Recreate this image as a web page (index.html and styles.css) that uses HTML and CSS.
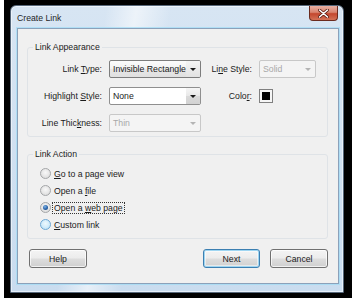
FILE: index.html
```html
<!DOCTYPE html>
<html>
<head>
<meta charset="utf-8">
<title>Create Link</title>
<link rel="stylesheet" href="styles.css">
</head>
<body>
<div class="shot">
  <div class="window">
    <div class="titlebar">
      <span class="title">Create Link</span>
      <span class="close">
        <svg width="11" height="9" viewBox="0 0 11 9">
          <path d="M1.5 1 L9.5 8 M9.5 1 L1.5 8" stroke="#5a1a10" stroke-width="3" stroke-linecap="round"/>
          <path d="M1.5 1 L9.5 8 M9.5 1 L1.5 8" stroke="#ffffff" stroke-width="1.6" stroke-linecap="round"/>
        </svg>
      </span>
    </div>
    <div class="client">
      <fieldset class="group g1">
        <legend>Link Appearance</legend>
        <div class="grid">
          <span class="lbl">Link <u>T</u>ype:</span>
          <div class="combo dlist"><span class="val">Invisible Rectangle</span><span class="btn"><i class="tri"></i></span></div>
          <span class="lbl">Li<u>n</u>e Style:</span>
          <div class="combo disabled"><span class="val">Solid</span><span class="btn"><i class="tri"></i></span></div>

          <span class="lbl">Highlight <u>S</u>tyle:</span>
          <div class="combo edit"><span class="val">None</span><span class="btn"><i class="tri"></i></span></div>
          <span class="lbl">Colo<u>r</u>:</span>
          <span class="swatch"></span>

          <span class="lbl">Line Thic<u>k</u>ness:</span>
          <div class="combo disabled"><span class="val">Thin</span><span class="btn"><i class="tri"></i></span></div>
        </div>
      </fieldset>
      <fieldset class="group g2">
        <legend>Link Action</legend>
        <div class="opts">
          <div class="opt"><span class="radio"></span><span class="txt"><u>G</u>o to a page view</span></div>
          <div class="opt"><span class="radio"></span><span class="txt">Open a <u>f</u>ile</span></div>
          <div class="opt"><span class="radio checked"></span><span class="txt focus">Open a <u>w</u>eb page</span></div>
          <div class="opt"><span class="radio hover"></span><span class="txt"><u>C</u>ustom link</span></div>
        </div>
      </fieldset>
      <div class="buttons">
        <span class="button">Help</span>
        <span class="spacer"></span>
        <span class="button default">Next</span>
        <span class="button">Cancel</span>
      </div>
    </div>
  </div>
</div>
</body>
</html>
```
FILE: styles.css
```css
* { box-sizing: border-box; }
html, body { margin: 0; padding: 0; background: #ffffff; }
body {
  font-family: "Liberation Sans", Arial, sans-serif;
  font-size: 8.7px;
  color: #1b1b1b;
}
u { text-decoration: underline; text-underline-offset: 1px; }

.shot {
  margin-left: 4px;
  width: 348px;
  height: 298px;
  background: #000000;
  padding: 5px 8px 5px 6px;
}
.window {
  width: 334px;
  height: 288px;
  border: 1px solid #56677a;
  border-radius: 6px 6px 0 0;
  background:
    linear-gradient(100deg, rgba(255,255,255,0) 25%, rgba(255,255,255,.55) 33%, rgba(255,255,255,0) 42%),
    linear-gradient(180deg, #d7e5f3 0%, #c9dcef 100%);
  padding: 0 4px 8px 6px;
  display: flex;
  flex-direction: column;
  box-shadow: inset 0 0 0 1px rgba(255,255,255,.55);
}
.titlebar {
  height: 22px;
  display: flex;
  justify-content: space-between;
  align-items: flex-start;
}
.title {
  margin-top: 6px;
  line-height: 12px;
  color: #1e1e1e;
}
.close {
  width: 29px;
  height: 15px;
  margin-right: 1px;
  border: 1px solid #6a2a1e;
  border-top: none;
  border-radius: 0 0 4px 4px;
  background: linear-gradient(180deg, #eab0a2 0%, #d98470 45%, #c4472e 55%, #d37257 100%);
  display: flex;
  align-items: center;
  justify-content: center;
}
.client {
  flex: 1;
  background: #f0f0f0;
  border: 1px solid #8ba1ba;
  box-shadow: 0 0 0 1px rgba(160, 220, 245, .7);
  display: flex;
  flex-direction: column;
}

.group {
  margin: 0 0 0 9px;
  width: 301px;
  min-width: 0;
  border: 1px solid #dfe3e7;
  border-radius: 3px;
  padding: 7px 6px 4px 6px;
}
.group legend {
  padding: 0 2px;
  margin-left: -1px;
  line-height: 12px;
  color: #1b1b1b;
}
.g1 { margin-top: 12px; }
.g2 { margin-top: 11px; padding-top: 5px; padding-bottom: 5px; }

.grid {
  display: grid;
  grid-template-columns: 68px 92px 44px 57px;
  grid-auto-rows: 18px;
  column-gap: 7px;
  row-gap: 9px;
  align-items: center;
}
.lbl { justify-self: end; white-space: nowrap; line-height: 12px; }

.combo {
  height: 18px;
  display: flex;
  align-items: stretch;
  border: 1px solid #7d7d7d;
  border-radius: 2px;
  overflow: hidden;
}
.combo .val {
  flex: 1;
  padding-left: 3px;
  display: flex;
  align-items: center;
  white-space: nowrap;
  overflow: hidden;
}
.combo .btn {
  width: 14px;
  display: flex;
  align-items: center;
  justify-content: center;
}
.tri {
  width: 0;
  height: 0;
  border-left: 3px solid transparent;
  border-right: 3px solid transparent;
  border-top: 3px solid #1a1a1a;
}
.dlist {
  background: linear-gradient(180deg, #fcfcfc 0%, #f1f1f1 50%, #e6e6e6 51%, #e0e0e0 100%);
}
.dlist .btn { background: linear-gradient(180deg, #f4f4f4 0%, #e2e2e2 100%); }
.edit { background: #ffffff; border-color: #8f8f8f; }
.edit .btn {
  background: linear-gradient(180deg, #f6f6f6 0%, #e8e8e8 50%, #dadada 51%, #d2d2d2 100%);
}
.disabled {
  border-color: #c8c8c8;
  background: #f4f4f4;
  color: #a8a8a8;
}
.disabled .tri { border-top-color: #b4b4b4; }

.swatch {
  width: 14px;
  height: 14px;
  border: 1px solid #808080;
  background: #000000;
  box-shadow: inset 0 0 0 2px #f6f6f6;
}

.opts { display: flex; flex-direction: column; }
.opt {
  height: 17px;
  display: flex;
  align-items: center;
}
.radio {
  width: 11px;
  height: 11px;
  margin-left: 6px;
  margin-right: 1px;
  border-radius: 50%;
  border: 1px solid #a4a6a8;
  background: radial-gradient(circle at 50% 40%, #f8f8f8 0%, #e6e6e6 55%, #d4d4d4 100%);
  position: relative;
}
.radio.checked::after {
  content: "";
  position: absolute;
  left: 2px;
  top: 2px;
  width: 5px;
  height: 5px;
  border-radius: 50%;
  background: radial-gradient(circle at 40% 35%, #7fb4e6 0%, #2a62a8 55%, #123f78 100%);
}
.radio.hover {
  border-color: #6fa8d4;
  background: radial-gradient(circle at 50% 40%, #eef9fe 0%, #cdeafa 60%, #afdcf5 100%);
}
.txt {
  padding: 0 1px;
  line-height: 10px;
  border: 1px solid transparent;
  white-space: nowrap;
}
.txt.focus { border: 1px dotted #333333; }

.buttons {
  margin-top: 10px;
  display: flex;
  gap: 10px;
  padding: 0 10px 0 11px;
}
.spacer { flex: 1; }
.button {
  width: 58px;
  height: 19px;
  border: 1px solid #707070;
  border-radius: 3px;
  background: linear-gradient(180deg, #f4f4f4 0%, #ececec 48%, #dddddd 52%, #d0d0d0 100%);
  box-shadow: inset 0 0 0 1px rgba(255,255,255,.7);
  display: flex;
  align-items: center;
  justify-content: center;
  line-height: 12px;
}
.button.default {
  width: 57px;
  border-color: #3c7fb1;
  box-shadow: inset 0 0 0 1px #9fd6f2, inset 0 0 0 2px rgba(255,255,255,.5);
}
```
